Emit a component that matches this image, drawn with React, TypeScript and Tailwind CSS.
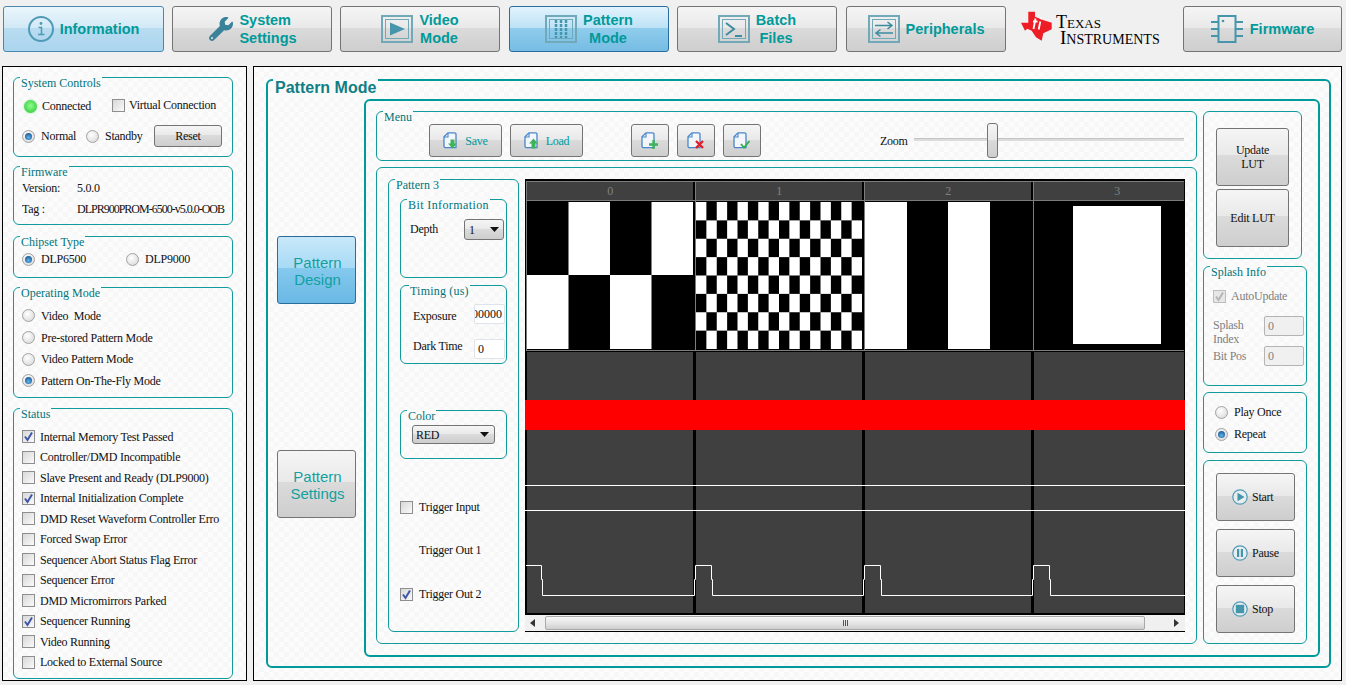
import type { ReactNode } from 'react';
import { FaWrench } from 'react-icons/fa';

const gloss = 'bg-[linear-gradient(#f5f5f5_0%,#e9e9e9_47%,#dbdbdb_47%,#cecece_100%)] border border-[#747474] rounded-[3px]';
const panelBg = 'bg-[#fafafa] bg-[image:repeating-conic-gradient(#f7f7f7_0_25%,#fcfcfc_0_50%)] bg-[length:10px_10px]';
const ICON = '#4596ab';
const FRAME = '#72a9b8';

function Frame({ children }: { children?: ReactNode }) {
  return (
    <svg width="32" height="28" viewBox="0 0 32 28" fill="none" className="shrink-0">
      <rect x="1" y="1" width="30" height="26" stroke={FRAME} strokeWidth="2" />
      <rect x="4.5" y="4.5" width="23" height="19" stroke={FRAME} strokeWidth="1" />
      {children}
    </svg>
  );
}

const icons: Record<string, ReactNode> = {
  info: (
    <svg width="26" height="28" viewBox="0 0 26 28" fill="none" className="shrink-0">
      <circle cx="13" cy="14" r="12" stroke="#4f9ab5" strokeWidth="2" />
      <circle cx="13" cy="8.5" r="1.4" fill="#4f9ab5" />
      <path d="M10.5 12.5h3v7M10 19.5h6.5" stroke="#4f9ab5" strokeWidth="1.5" />
    </svg>
  ),
  wrench: <FaWrench size={24} color="#3a819a" className="shrink-0 ml-[2px]" />,
  video: (
    <Frame>
      <path d="M9 7.5 24 14 9 20.5Z" fill={ICON} />
    </Frame>
  ),
  pattern: (
    <Frame>
      <path d="M11 5v18M16 5v18M21 5v18" stroke={ICON} strokeWidth="2.5" strokeDasharray="3 1" />
    </Frame>
  ),
  batch: (
    <Frame>
      <path d="M8 8l8 6-8 6M17 21h7" stroke="#3d8ba0" strokeWidth="2" />
    </Frame>
  ),
  periph: (
    <Frame>
      <path d="M7 10.5h17M19.5 7l4.5 3.5-4.500 3.500M25 18H8M12.5 14.5 8 18l4.5 3.5" stroke="#3d8ba0" strokeWidth="1.5" />
    </Frame>
  ),
  chip: (
    <svg width="32" height="28" viewBox="0 0 32 28" fill="none" className="shrink-0 mr-[1px]">
      <rect x="7.5" y="1" width="17" height="26" stroke={ICON} strokeWidth="2" />
      <circle cx="12" cy="6" r="1.3" fill={ICON} />
      <path d="M0 7h7M0 14h7M0 21h7M25 7h7M25 14h7M25 21h7" stroke={ICON} strokeWidth="2" />
    </svg>
  ),
};

function Tab({ lines, icon, w, active, left }: { lines: string[]; icon: string; w: string; active?: 'soft' | 'strong'; left?: boolean }) {
  const skin =
    active === 'soft'
      ? 'bg-[linear-gradient(#eaf6fc_0%,#d2e9f6_47%,#b9dcf1_47%,#abd5ee_100%)] border border-[#4a86ae] rounded-[3px]'
      : active === 'strong'
        ? 'bg-[linear-gradient(#e2f3fc_0%,#bde2f6_47%,#90cdec_47%,#76bce4_100%)] border border-[#2a6c9c] rounded-[3px]'
        : gloss;
  return (
    <div className={`${w} h-[46px] flex items-center justify-center gap-[6px] shrink-0 ${skin}`}>
      {icons[icon]}
      <div className={`font-['Liberation_Sans',sans-serif] font-bold text-[14.5px] leading-[18px] tracking-normal text-[#009a9a] ${left ? 'text-left' : 'text-center'}`}>
        {lines.map((l) => (
          <div key={l}>{l}</div>
        ))}
      </div>
    </div>
  );
}

function Group({ title, className, legend, children }: { title?: string; className?: string; legend?: string; children?: ReactNode }) {
  return (
    <div className={`relative border border-[#109c9c] rounded-[6px] shrink-0 ${className ?? ''}`}>
      {title && (
        <span className={`absolute top-[-2px] left-[6px] px-[1px] bg-[#fafafa] leading-[14px] text-[#00757a] whitespace-nowrap ${legend ?? 'tracking-normal'}`}>{title}</span>
      )}
      {children}
    </div>
  );
}

function Radio({ on }: { on?: boolean }) {
  return (
    <span className="w-[13px] h-[13px] rounded-full border border-[#a3a3a3] bg-[radial-gradient(circle_at_40%_35%,#ffffff,#d4d4d4)] flex items-center justify-center shrink-0">
      {on && <span className="w-[7px] h-[7px] rounded-full bg-[radial-gradient(circle_at_50%_65%,#5fb4ea,#0a3f7c)]" />}
    </span>
  );
}

function Check({ on, disabled }: { on?: boolean; disabled?: boolean }) {
  return (
    <span className={`w-[13px] h-[13px] border flex items-center justify-center shrink-0 ${disabled ? 'border-[#bdbdbd] bg-[#e6e6e6]' : 'border-[#8e8e8e] bg-[linear-gradient(135deg,#d8d8d8,#fafafa)]'}`}>
      {on && (
        <svg width="11" height="11" viewBox="0 0 11 11" fill="none">
          <path d="M2 5.5 4.5 9 9 1.5" stroke={disabled ? '#b5b5b5' : '#3f57a8'} strokeWidth="2" />
        </svg>
      )}
    </span>
  );
}

function Arrow() {
  return (
    <svg width="9" height="5" viewBox="0 0 9 5" className="shrink-0">
      <path d="M0 0h9L4.5 5Z" fill="#111" />
    </svg>
  );
}

function Doc({ mark }: { mark: 'down' | 'up' | 'plus' | 'x' | 'check' }) {
  return (
    <svg width="18" height="18" viewBox="0 0 18 18" fill="none" className="shrink-0">
      <path d="M5 .8h6.5a1.5 1.5 0 0 1 1.5 1.5V15.7H2.5a1.5 1.5 0 0 1-1.5-1.5V4.8Z" stroke="#4a86c8" strokeWidth="1.3" fill="#f2f6fb" />
      <path d="M5 1v4H1" stroke="#4a86c8" strokeWidth="1.1" />
      {mark === 'down' && <path d="M7.5 7.5h4v4H14l-4.5 5-4.5-5h2.500Z" fill="#3fb35a" />}
      {mark === 'up' && <path d="M7.500 16.500v-5H5L9.500 6.500l4.500 5h-2.500v5Z" fill="#3fb35a" />}
      {mark === 'plus' && <path d="M12.500 8v9M8 12.500h9" stroke="#3fb35a" strokeWidth="2.400" />}
      {mark === 'x' && <path d="M9 9l7 7M16 9l-7 7" stroke="#e0202a" strokeWidth="2.400" />}
      {mark === 'check' && <path d="M8 12l3 3.500 5.500-6.500" stroke="#2fae4a" strokeWidth="1.800" />}
    </svg>
  );
}

function PlayIcon({ kind }: { kind: 'play' | 'pause' | 'stop' }) {
  return (
    <svg width="16" height="16" viewBox="0 0 16 16" fill="none" className="shrink-0">
      <circle cx="8" cy="8" r="7.200" stroke="#4f9ab5" strokeWidth="1.200" fill="#e8eef0" />
      {kind === 'play' && <path d="M5.500 3.800 12.500 8l-7 4.200Z" fill={ICON} />}
      {kind === 'pause' && <path d="M5 4h2.200v8H5zM8.800 4H11v8H8.800z" fill={ICON} />}
      {kind === 'stop' && <rect x="3.800" y="3.800" width="8.400" height="8.400" fill={ICON} />}
    </svg>
  );
}

function TiLogo() {
  return (
    <div className="w-[141px] ml-[15px] h-[46px] flex items-start shrink-0 font-['Liberation_Serif',serif] text-black tracking-normal">
      <svg width="32" height="31" viewBox="0 0 32 31" className="shrink-0 mt-[5px]">
        <path d="M7.300.7H14V5.700L22 9l8.700 2.700v6.600L22.300 22.300l-1.600 7.400L15 26.300l-4.300-6.600L6.300 17.700 4 19.700 0 11.700h7.300Z" fill="#ee1c25" />
        <path d="M14.500 7.500l-2 10.500M12 10.500h4.500M20.500 6.500l-.6 1.800M19.300 10.500l-1.600 8" stroke="#fff" strokeWidth="1.800" fill="none" />
      </svg>
      <div className="ml-[3px] mt-[9px] leading-[15px]">
        <div className="text-[13px] leading-[14px] whitespace-nowrap">
          <span className="text-[18px]">T</span>EXAS
        </div>
        <div className="text-[14px] leading-[14px] ml-[4px] whitespace-nowrap">
          <span className="text-[19px]">I</span>NSTRUMENTS
        </div>
      </div>
    </div>
  );
}

const statuses: [string, boolean][] = [
  ['Internal Memory Test Passed', true],
  ['Controller/DMD Incompatible', false],
  ['Slave Present and Ready (DLP9000)', false],
  ['Internal Initialization Complete', true],
  ['DMD Reset Waveform Controller Erro', false],
  ['Forced Swap Error', false],
  ['Sequencer Abort Status Flag Error', false],
  ['Sequencer Error', false],
  ['DMD Micromirrors Parked', false],
  ['Sequencer Running', true],
  ['Video Running', false],
  ['Locked to External Source', false],
];

function LeftPanel() {
  return (
    <div className={`w-[245px] h-[615px] ml-[2px] border border-black shrink-0 pl-[10px] pt-[10px] flex flex-col ${panelBg}`}>
      <Group title="System Controls" className="w-[220px] h-[80px] pt-[18px] pl-[8px]">
        <div className="flex items-center h-[20px]">
          <span className="w-[13px] h-[13px] ml-[2px] rounded-full bg-[radial-gradient(circle_at_50%_45%,#8dff8d,#25c02f)] shadow-[0_0_2px_#7be27b] shrink-0" />
          <span className="ml-[5px] w-[70px]">Connected</span>
          <span className="-mt-[2px] flex items-center">
            <Check />
            <span className="ml-[4px]">Virtual Connection</span>
          </span>
        </div>
        <div className="flex items-center h-[22px] mt-[9px]">
          <Radio on />
          <span className="ml-[6px] w-[45px]">Normal</span>
          <Radio />
          <span className="ml-[6px] w-[49px]">Standby</span>
          <div className={`w-[68px] h-[22px] flex items-center justify-center ${gloss}`}>Reset</div>
        </div>
      </Group>
      <Group title="Firmware" className="w-[220px] h-[59px] mt-[9px] pl-[8px] pt-[10px] grid grid-cols-[55px_1fr] auto-rows-[21px] items-center">
        <span>Version:</span>
        <span>5.0.0</span>
        <span>Tag :</span>
        <span className="whitespace-nowrap tracking-[-1px]">DLPR900PROM-6500-v5.0.0-OOB</span>
      </Group>
      <Group title="Chipset Type" className="w-[220px] h-[42px] mt-[11px] pl-[8px] pt-[14px] flex items-start">
        <div className="flex items-center w-[104px] h-[16px]">
          <Radio on />
          <span className="ml-[6px]">DLP6500</span>
        </div>
        <div className="flex items-center h-[16px]">
          <Radio />
          <span className="ml-[6px]">DLP9000</span>
        </div>
      </Group>
      <Group title="Operating Mode" className="w-[220px] h-[111px] mt-[9px] pl-[8px] pt-[17px]">
        {['Video  Mode', 'Pre-stored Pattern Mode', 'Video Pattern Mode', 'Pattern On-The-Fly Mode'].map((m, i) => (
          <div key={m} className="flex items-center h-[21.700px]">
            <Radio on={i === 3} />
            <span className="ml-[6px] whitespace-pre">{m}</span>
          </div>
        ))}
      </Group>
      <Group title="Status" className="w-[220px] h-[271px] mt-[10px] pl-[8px] pt-[17.5px]">
        {statuses.map(([s, on]) => (
          <div key={s} className="flex items-center h-[20.500px]">
            <Check on={on} />
            <span className="ml-[5px] whitespace-nowrap">{s}</span>
          </div>
        ))}
      </Group>
    </div>
  );
}

const pulses = [0, 1, 2, 3];
const wave =
  'M1 386.500H16.500V400.500H17.500V416.500' +
  pulses.map((k) => {
    const x = 169.500 + 169 * k;
    return `H${x}V400.500H${x + 1}V386.500H${x + 17}V400.500H${x + 18}V416.500`;
  }).join('') + 'H660';

function Img0() {
  return (
    <svg width="166" height="147" viewBox="0 0 166 147" className="block">
      <rect width="166" height="147" fill="#000" />
      <path d="M41.500 0h41.500v73H41.500zM124.500 0H166v73h-41.500zM0 73h41.500v74H0zM83 73h41.500v74H83z" fill="#fff" />
    </svg>
  );
}

function Img1() {
  const cells: ReactNode[] = [];
  for (let r = 0; r < 8; r++)
    for (let c = 0; c < 16; c++)
      if ((r + c) % 2 === 0) cells.push(<rect key={`${r}-${c}`} x={c * 10.375} y={r * 18.375} width="10.375" height="18.375" fill="#fff" />);
  return (
    <svg width="166" height="147" viewBox="0 0 166 147" className="block">
      <rect width="166" height="147" fill="#000" />
      {cells}
    </svg>
  );
}

function Img2() {
  return (
    <svg width="166" height="147" viewBox="0 0 166 147" className="block">
      <rect width="166" height="147" fill="#000" />
      <path d="M0 0h42v147H0zM83 0h42v147H83z" fill="#fff" />
    </svg>
  );
}

function Img3() {
  return (
    <svg width="166" height="147" viewBox="0 0 166 147" className="block">
      <rect width="166" height="147" fill="#000" />
      <rect x="39" y="4" width="88" height="138" fill="#fff" />
    </svg>
  );
}

const images = [<Img0 key="0" />, <Img1 key="1" />, <Img2 key="2" />, <Img3 key="3" />];

function Timeline() {
  return (
    <div className="w-[660px] h-[453px] ml-[6px] border-b border-black flex flex-col shrink-0 bg-black">
      <div className="relative h-[436px] overflow-hidden flex pl-[1px] pt-[2px] pb-[2px] shrink-0">
        {images.map((img, i) => (
          <div key={i} className="w-[169px] shrink-0 flex flex-col">
            <div className="h-[170px] border-l border-t border-b border-[#7c7c7c] shrink-0">
              <div className="h-[19px] border-b border-[#7c7c7c] -ml-[1px]">
                <div className="ml-[1px] w-[166px] h-[18px] bg-[#404040] text-center text-[#808080] leading-[18px]">{i}</div>
              </div>
              <div className="mt-[1px]">{img}</div>
            </div>
            <div className="w-[166px] ml-[1px] mt-[1px] flex-1 bg-[#404040]" />
          </div>
        ))}
        <div className="absolute right-0 top-0 bottom-0 w-px bg-black" />
        <div className="absolute left-0 right-0 top-[221px] h-[30px] bg-[#ff0000]" />
        <div className="absolute left-0 right-0 top-[306px] h-px bg-white" />
        <div className="absolute left-0 right-0 top-[331px] h-px bg-white" />
        <svg width="660" height="436" viewBox="0 0 660 436" fill="none" className="absolute left-0 top-0">
          <path d={wave} stroke="#fff" strokeWidth="1" />
        </svg>
      </div>
      <div className="h-[16px] bg-[#f0f0f0] flex items-center shrink-0">
        <svg width="6" height="8" viewBox="0 0 6 8" className="ml-[5px] shrink-0">
          <path d="M5 0v8L0 4Z" fill="#333" />
        </svg>
        <div className="ml-[9px] w-[600px] h-[14px] rounded-[2px] border border-[#a8a8a8] bg-[linear-gradient(#f6f6f6,#e6e6e6_50%,#cfcfcf)] flex items-center justify-center gap-[1px] shrink-0">
          <span className="w-px h-[6px] bg-[#555]" />
          <span className="w-px h-[6px] bg-[#555]" />
          <span className="w-px h-[6px] bg-[#555]" />
        </div>
        <svg width="6" height="8" viewBox="0 0 6 8" className="ml-[28px] shrink-0">
          <path d="M1 0v8l5-4Z" fill="#333" />
        </svg>
      </div>
    </div>
  );
}

function PatternGroup() {
  return (
    <Group title="Pattern 3" className="w-[131px] h-[453px] pl-[11px] pt-[19px]">
      <Group title="Bit Information" legend="tracking-[0.4px]" className="w-[107px] h-[79px] pl-[9px] pt-[19px]">
        <div className="flex items-center">
          <span className="w-[54px] -mt-[2px]">Depth</span>
          <div className={`w-[40px] h-[21px] flex items-center justify-between px-[4px] ${gloss}`}>
            <span>1</span>
            <Arrow />
          </div>
        </div>
      </Group>
      <Group title="Timing (us)" legend="tracking-[0.2px] ml-[2px]" className="w-[107px] h-[79px] mt-[7px] pl-[12px] pt-[18px]">
        <div className="flex items-center h-[20px]">
          <span className="w-[61px] mt-[4px]">Exposure</span>
          <div className="w-[31px] h-[20px] bg-white border border-[#dfe4ea] rounded-[2px] overflow-hidden flex justify-end items-center pr-[2px] tracking-normal">00000</div>
        </div>
        <div className="flex items-center h-[20px] mt-[15px]">
          <span className="w-[61px] -mt-[6px]">Dark Time</span>
          <div className="w-[31px] h-[20px] bg-white border border-[#dfe4ea] rounded-[2px] flex items-center pl-[3px]">0</div>
        </div>
      </Group>
      <Group title="Color" className="w-[107px] h-[49px] mt-[46px] pl-[11px] pt-[14px]">
        <div className={`w-[83px] h-[19px] flex items-center justify-between pl-[3px] pr-[5px] ${gloss}`}>
          <span>RED</span>
          <Arrow />
        </div>
      </Group>
      <div className="flex items-center h-[20px] mt-[38px]">
        <Check />
        <span className="ml-[6px]">Trigger Input</span>
      </div>
      <div className="flex items-center h-[20px] mt-[23px] pl-[19px]">Trigger Out 1</div>
      <div className="flex items-center h-[20px] mt-[24px]">
        <Check on />
        <span className="ml-[6px]">Trigger Out 2</span>
      </div>
    </Group>
  );
}

function MenuBar() {
  return (
    <Group title="Menu" className="w-[821px] h-[50px] pl-[52px] pt-[12px] flex items-start">
      <div className={`w-[73px] h-[33px] flex items-center justify-center gap-[4px] text-[#009a9a] ${gloss}`}>
        <Doc mark="down" />
        Save
      </div>
      <div className={`w-[73px] h-[33px] ml-[8px] flex items-center justify-center gap-[4px] text-[#009a9a] ${gloss}`}>
        <Doc mark="up" />
        Load
      </div>
      <div className={`w-[38px] h-[33px] ml-[48px] flex items-center justify-center ${gloss}`}>
        <Doc mark="plus" />
      </div>
      <div className={`w-[38px] h-[33px] ml-[8px] flex items-center justify-center ${gloss}`}>
        <Doc mark="x" />
      </div>
      <div className={`w-[38px] h-[33px] ml-[8px] flex items-center justify-center ${gloss}`}>
        <Doc mark="check" />
      </div>
      <span className="ml-[119px] mt-[10px] w-[34px]">Zoom</span>
      <div className="relative w-[270px] h-[33px]">
        <div className="absolute left-0 right-0 top-[14px] h-[3px] bg-[#dcdcdc] border-t border-[#c4c4c4]" />
        <div className={`absolute left-[73px] top-[-1px] w-[11px] h-[35px] ${gloss}`} />
      </div>
    </Group>
  );
}

function RightColumn() {
  return (
    <div className="w-[104px] ml-[6px] flex flex-col shrink-0">
      <Group className="w-[99px] h-[148px] pl-[12px] pt-[16px]">
        <div className={`w-[73px] h-[58px] flex items-center justify-center text-center leading-[14px] ${gloss}`}>
          Update
          <br />
          LUT
        </div>
        <div className={`w-[73px] h-[58px] mt-[3px] flex items-center justify-center ${gloss}`}>Edit LUT</div>
      </Group>
      <Group title="Splash Info" className="w-[104px] h-[120px] mt-[7px] pl-[9px] pt-[22px] text-[#808080]">
        <div className="flex items-center h-[14px]">
          <Check on disabled />
          <span className="ml-[5px]">AutoUpdate</span>
        </div>
        <div className="flex items-start mt-[13px] h-[30px]">
          <span className="w-[51px] leading-[14px] pt-[2px]">
            Splash
            <br />
            Index
          </span>
          <div className="w-[40px] h-[20px] bg-[#f0f0f0] border border-[#b4b4b4] rounded-[2px] pl-[3px] flex items-center">0</div>
        </div>
        <div className="flex items-center">
          <span className="w-[51px]">Bit Pos</span>
          <div className="w-[40px] h-[20px] bg-[#f0f0f0] border border-[#b4b4b4] rounded-[2px] pl-[3px] flex items-center">0</div>
        </div>
      </Group>
      <Group className="w-[104px] h-[61px] mt-[6px] pl-[11px] pt-[9px]">
        <div className="flex items-center h-[20px]">
          <Radio />
          <span className="ml-[6px]">Play Once</span>
        </div>
        <div className="flex items-center h-[20px] mt-[2px]">
          <Radio on />
          <span className="ml-[6px]">Repeat</span>
        </div>
      </Group>
      <Group className="w-[104px] h-[184px] mt-[7px] pl-[12px] pt-[12px]">
        {(
          [
            ['Start', 'play'],
            ['Pause', 'pause'],
            ['Stop', 'stop'],
          ] as const
        ).map(([label, kind], i) => (
          <div key={label} className={`w-[79px] h-[48px] pl-[15px] flex items-center gap-[4px] ${i > 0 ? 'mt-[8px]' : ''} ${gloss}`}>
            <PlayIcon kind={kind} />
            {label}
          </div>
        ))}
      </Group>
    </div>
  );
}

function MainPanel() {
  return (
    <div className={`w-[1089px] h-[615px] ml-[6px] border border-black shrink-0 pl-[12px] pt-[12px] ${panelBg}`}>
      <div className="relative w-[1065px] h-[589px] border-2 border-[#009a9a] rounded-[6px] flex">
        <span className="absolute top-[-3px] left-[5px] px-[2px] h-[20px] bg-[#fafafa] font-['Liberation_Sans',sans-serif] font-bold text-[16px] leading-[20px] tracking-normal text-[#0e7f86]">Pattern Mode</span>
        <div className="w-[96px] pl-[9px] shrink-0 font-['Liberation_Sans',sans-serif] text-[15px] leading-[17px] tracking-normal text-[#12a0a0] text-center">
          <div className="w-[79px] h-[68px] mt-[155px] pl-[2px] pt-[2px] flex items-center justify-center bg-[linear-gradient(#c8e8f9_0%,#a8daf5_47%,#85c9ee_47%,#69b8e4_100%)] border border-[#2a6c9c] rounded-[3px]">
            Pattern
            <br />
            Design
          </div>
          <div className={`w-[79px] h-[68px] mt-[146px] pl-[2px] pt-[2px] flex items-center justify-center ${gloss}`}>
            Pattern
            <br />
            Settings
          </div>
        </div>
        <div className="w-[956px] h-[558px] mt-[18px] border-2 border-[#009a9a] rounded-[6px] pl-[10px] pt-[10px] flex shrink-0">
          <div className="w-[821px] shrink-0">
            <MenuBar />
            <Group className="w-[821px] h-[477px] mt-[6px] pl-[11px] pt-[11px] flex items-start">
              <PatternGroup />
              <Timeline />
            </Group>
          </div>
          <RightColumn />
        </div>
      </div>
    </div>
  );
}

export default function App() {
  return (
    <div className="w-[1346px] h-[685px] overflow-hidden bg-[#f0f0f0] font-['Liberation_Serif',serif] text-[12px] leading-[14px] tracking-[-0.25px] text-[#111]">
      <div className="h-[66px] pl-[3px] pt-[6px] flex items-start">
        <Tab lines={['Information']} icon="info" w="w-[161px]" active="soft" />
        <div className="w-[8px] shrink-0" />
        <Tab lines={['System', 'Settings']} icon="wrench" w="w-[160px]" left />
        <div className="w-[8px] shrink-0" />
        <Tab lines={['Video', 'Mode']} icon="video" w="w-[160px]" />
        <div className="w-[9px] shrink-0" />
        <Tab lines={['Pattern', 'Mode']} icon="pattern" w="w-[160px]" active="strong" />
        <div className="w-[8px] shrink-0" />
        <Tab lines={['Batch', 'Files']} icon="batch" w="w-[160px]" />
        <div className="w-[9px] shrink-0" />
        <Tab lines={['Peripherals']} icon="periph" w="w-[160px]" />
        <TiLogo />
        <div className="w-[21px] shrink-0" />
        <Tab lines={['Firmware']} icon="chip" w="w-[159px]" />
      </div>
      <div className="flex">
        <LeftPanel />
        <MainPanel />
      </div>
    </div>
  );
}
